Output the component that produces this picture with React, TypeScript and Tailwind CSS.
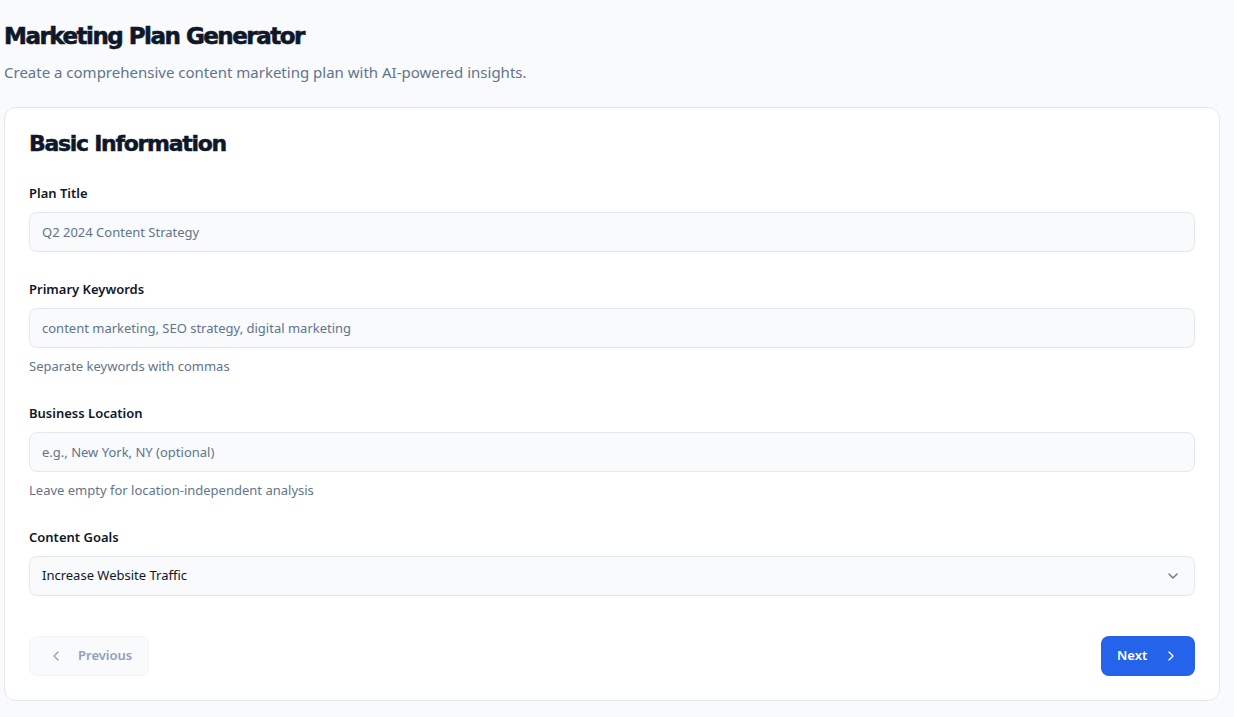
import { ChevronDown, ChevronLeft, ChevronRight } from 'lucide-react';

const display = { fontFamily: '"DejaVu Sans", sans-serif' };

function Field({
  label,
  placeholder,
  help,
}: {
  label: string;
  placeholder: string;
  help?: string;
}) {
  return (
    <div className="flex flex-col">
      <label className="text-[13px] leading-5 font-semibold text-[#0f172a] mb-[9px]">{label}</label>
      <input
        placeholder={placeholder}
        className="h-10 w-full rounded-lg border border-slate-200 bg-slate-50 px-3 text-[13px] text-slate-900 placeholder:text-slate-500 outline-none"
      />
      {help && <p className="mt-2 text-[13px] leading-5 text-slate-500">{help}</p>}
    </div>
  );
}

export default function App() {
  return (
    <div
      className="min-h-screen bg-slate-50 pl-1 pr-[14px] pt-[22px] pb-4"
      style={{ fontFamily: '"Noto Sans", sans-serif' }}
    >
      <h1
        className="text-[23px] leading-7 font-bold tracking-[-1.5px] text-[#0f172a] [-webkit-text-stroke:0.6px_#0f172a]"
        style={display}
      >
        Marketing Plan Generator
      </h1>
      <p className="mt-[10px] text-[15px] leading-6 text-slate-500">
        Create a comprehensive content marketing plan with AI-powered insights.
      </p>

      <div className="mt-[23px] rounded-xl border border-slate-200 bg-white px-6 pt-6 pb-6">
        <h2
          className="text-[22px] leading-6 font-bold tracking-[-1.3px] text-[#0f172a] mb-[27px] [-webkit-text-stroke:0.5px_#0f172a]"
          style={display}
        >
          Basic Information
        </h2>

        <div className="flex flex-col gap-[27px]">
          <Field label="Plan Title" placeholder="Q2 2024 Content Strategy" />
          <Field
            label="Primary Keywords"
            placeholder="content marketing, SEO strategy, digital marketing"
            help="Separate keywords with commas"
          />
          <Field
            label="Business Location"
            placeholder="e.g., New York, NY (optional)"
            help="Leave empty for location-independent analysis"
          />
          <div className="flex flex-col">
            <label className="text-[13px] leading-5 font-semibold text-[#0f172a] mb-[9px]">Content Goals</label>
            <div className="relative">
              <select className="h-10 w-full appearance-none rounded-lg border border-slate-200 bg-slate-50 px-3 text-[13px] text-slate-900 outline-none">
                <option>Increase Website Traffic</option>
                <option>Generate Leads</option>
                <option>Build Brand Awareness</option>
              </select>
              <ChevronDown className="pointer-events-none absolute right-[14px] top-1/2 h-4 w-4 -translate-y-1/2 text-slate-500" />
            </div>
          </div>
        </div>

        <div className="mt-10 flex items-center justify-between">
          <button className="flex h-10 w-[120px] items-center gap-[14px] rounded-lg border border-slate-100 bg-slate-50 pl-[18px] text-[13px] font-semibold text-slate-400">
            <ChevronLeft className="h-4 w-4" />
            Previous
          </button>
          <button className="flex h-10 w-[94px] items-center gap-4 rounded-lg bg-[#2563eb] pl-4 text-[13px] font-semibold text-white">
            Next
            <ChevronRight className="h-4 w-4" />
          </button>
        </div>
      </div>
    </div>
  );
}
